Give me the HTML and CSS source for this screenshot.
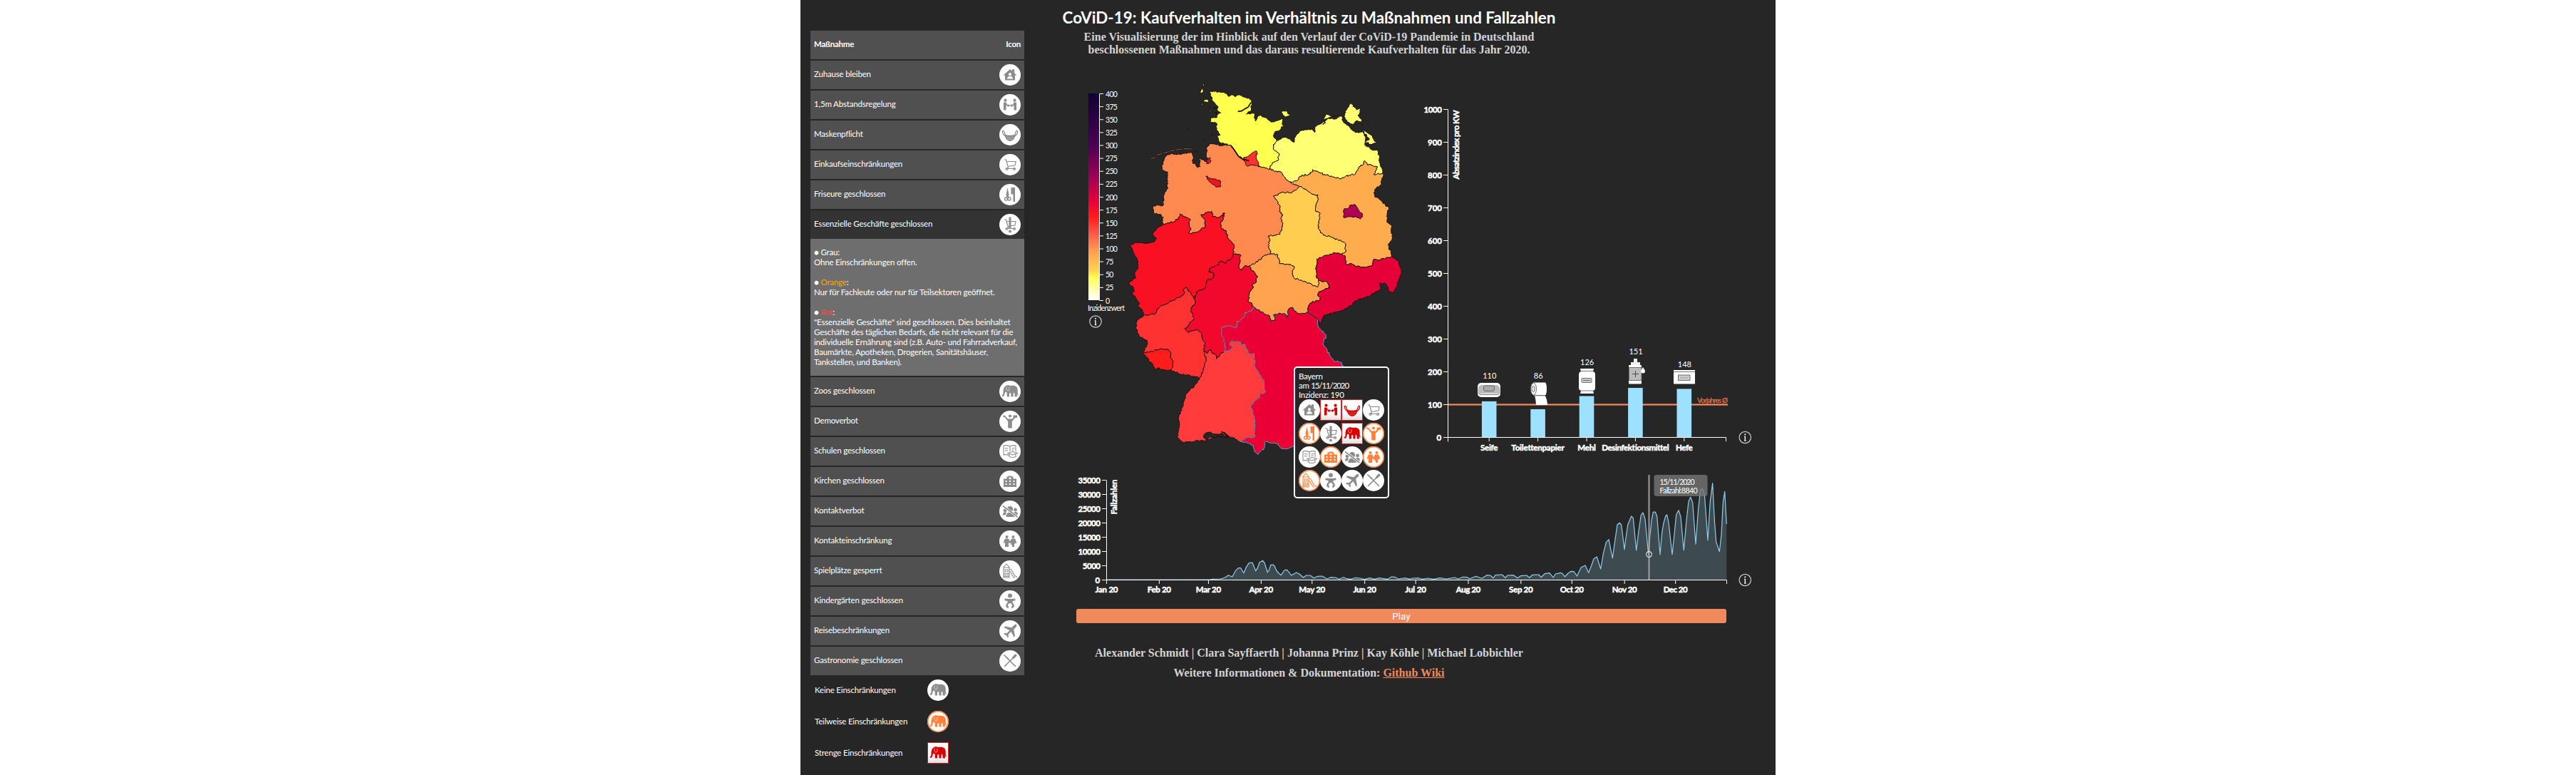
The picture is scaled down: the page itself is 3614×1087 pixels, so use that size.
FILE: index.html
```html
<!DOCTYPE html>
<html lang="de">
<head>
<meta charset="utf-8">
<title>CoViD-19: Kaufverhalten im Verhältnis zu Maßnahmen und Fallzahlen</title>
<link rel="stylesheet" href="styles.css">
</head>
<body>
<svg class="sprite" aria-hidden="true">
  <symbol id="home" viewBox="0 0 30 30"><path fill="currentColor" d="M5.500 15.500 15 7l2.800 2.400V7.200h3.400v5.300l3.300 3H22V22.500H8v-7z"/><circle cx="15" cy="14.200" r="2" fill="#fff"/><path fill="#fff" d="M11 20.500c0-5 8-5 8 0z"/></symbol>
  <symbol id="distance" viewBox="0 0 30 30"><g fill="currentColor"><circle cx="8.500" cy="8.700" r="2.100"/><circle cx="21.500" cy="8.700" r="2.100"/><path d="M6 11.500h3.500l1.500 3-1.500 2v6H6zM24 11.500h-3.500l-1.500 3 1.500 2v6H24z"/><path d="m10 16 3-2.300v1.600h4v-1.600l3 2.300-3 2.300v-1.600h-4v1.600z"/></g></symbol>
  <symbol id="mask" viewBox="0 0 30 30"><path fill="currentColor" d="M7.500 14.500Q15 17 22.500 14.500C22 20 19.500 23.500 15 24 10.500 23.500 8 20 7.500 14.500z"/><path fill="none" stroke="currentColor" stroke-width="1.200" d="M8 17C4.500 14 3.500 10 5.200 9.400 7 9 7.200 13 8.200 15M22 17c3.500-3 4.500-7 2.800-7.600C23 9 22.800 13 21.800 15"/><path stroke="#fff" stroke-opacity=".5" stroke-width=".6" fill="none" d="M10 18.500q5 1 10 0M11 21q4 1 8 0"/></symbol>
  <symbol id="cart" viewBox="0 0 30 30"><g fill="none" stroke="currentColor" stroke-width="1.200"><path d="M7 8h2.500l3 11-2 1.500h11.500M10.500 10.500h12.500l-1 5.500-10 1.500"/><circle cx="10.500" cy="21" r="1.500"/><circle cx="21" cy="21" r="1.500"/></g></symbol>
  <symbol id="hair" viewBox="0 0 30 30"><path fill="currentColor" d="m11.500 5 2 10-1.500 3.500h-1.500L9.500 15zM16.500 5H22v20h-2.500V14.500h-3z"/><g fill="none" stroke="currentColor" stroke-width="1.300"><circle cx="9.500" cy="21" r="2"/><circle cx="14" cy="21" r="2"/><path d="M10.500 19.500 12 16l1.500 3.500"/></g></symbol>
  <symbol id="essential" viewBox="0 0 30 30"><g fill="none" stroke="currentColor" stroke-width="1.200"><path d="M7 8h2.500l3 11-2 1.500h11.500M10.500 10.500h12.500l-1 5.500-10 1.500"/><circle cx="10.500" cy="21" r="1.500"/><circle cx="21" cy="21" r="1.500"/></g><path fill="currentColor" d="M13.500 4.500h3v16h-3z"/><circle cx="15" cy="24.500" r="1.900" fill="currentColor"/></symbol>
  <symbol id="elephant" viewBox="0 0 30 30"><path fill="currentColor" d="M10 6.700c2.500-1 4 .3 6 .2 3-.4 6.500-.4 8.500 2.100 1.500 2.300 1.300 5 1.200 8l1.200 3.500-1 .3-1-2.800v4.500h-3.200L21.500 18l-1.700-1.500-.3 6h-3l-.3-5.300h-2l-.3 5.300h-3L10.500 16.500 8.500 15.500C7.500 17 7.500 19.500 6.500 21.200 5.300 22.700 3.500 22 3.700 19.700l1.100.1c1-1.500.5-4.500.8-6.500C6 10 7.500 7.500 10 6.700z"/><path d="M10.500 8.500c-1.500 3 0 6.500 2.600 5.500 1-1.500 1.200-3 .6-5" fill="none" stroke="#fff" stroke-width=".6"/></symbol>
  <symbol id="demo" viewBox="0 0 30 30"><g fill="currentColor"><circle cx="15" cy="7.500" r="2.100"/><path d="M9.300 8.500 12 11.500h6l2.800-2.500 1.300 1.500L17.800 15v9.500h-5.600V15L7.800 9.500zM19.500 6.500h5.500v3.500h-5.500zM5 6.500l4 1v2l-4-1z"/></g></symbol>
  <symbol id="school" viewBox="0 0 30 30"><path fill="none" stroke="currentColor" stroke-width="1.100" d="M23 15V7q-4-1-8 1-4-2-9-1v13q4-1 8 1M15 8v7M8 10.500l4.500.5M8 13.500l4 .5M17.500 11l4-.5M17.500 13.500l3-.5M12 17.500l6.500-2 7 2-7 2.500zM14 18.500v4q4.500 2 9 0v-4"/></symbol>
  <symbol id="church" viewBox="0 0 30 30"><path fill="currentColor" d="M6 11.500h4.500v-3h2V7.500h5v1h2v3H24V23H6z"/><path fill="#fff" d="M14.400 9h1.200v1.200h1.200v1.200h-1.200v1.200h-1.200v-1.200h-1.200v-1.200h1.200zM8.500 14h2v2h-2zm5.500 0h2v2h-2zm5.500 0h2v2h-2zm-11 4h2v2h-2zm5.500 0h2v2h-2zm5.500 0h2v2h-2z"/></symbol>
  <symbol id="crowd" viewBox="0 0 30 30"><g fill="currentColor"><circle cx="15" cy="12" r="4"/><circle cx="8" cy="14" r="2.400"/><circle cx="22.500" cy="13" r="2.400"/><path d="M9.500 23q0-6.500 5.500-6.500t6.500 6.500zM5 20.500q0-4.200 3-4.200 1.800 0 2 1L8.500 20.500zM26 20q0-4-3.500-4-2 0-2.300 1l2 3z"/></g><path stroke="#fff" stroke-width="3.400" d="M5 7.500 25.500 23"/><path stroke="currentColor" stroke-width="1.600" d="M5 7.500 25.500 23"/></symbol>
  <symbol id="pair" viewBox="0 0 30 30"><g fill="currentColor"><circle cx="10.500" cy="9" r="2"/><circle cx="19.500" cy="9" r="2"/><path d="M8 11.500h5l2 4 2-4h5l2.500 6-1.500.6-1-1.600.7 2h-1.700V23h-3v-3h-2l.8-3-1.800 1.500L13 16.500V23H8v-6.500L6.500 18 5.700 17z"/></g></symbol>
  <symbol id="slide" viewBox="0 0 30 30"><path fill="none" stroke="currentColor" stroke-width="1.100" d="M6 24V9.500L10 5l4 4.500V24zM6 10h8M8 13h4v3H8zM6 18.500h8M6 20.500h8M6 22.500h8M14 12c5-1 4 9 11 11.500M14 15c3 0 3 8 8 9.500"/></symbol>
  <symbol id="baby" viewBox="0 0 30 30"><g fill="currentColor"><circle cx="15" cy="7.500" r="3"/><path d="m8 11.500 4.500.5h5l4.500-.5.800 2.500-4.300 1.200v3h-7v-3L7.200 14z"/></g><path d="M12.800 18c-3 2-3.300 4.500 0 6M17.200 18c3 2 3.300 4.500 0 6" stroke="currentColor" stroke-width="2.600" fill="none"/></symbol>
  <symbol id="plane" viewBox="0 0 30 30"><path fill="currentColor" d="M24 6c1 1 0 3-1.300 4.300l-2.500 2.500L22 22l-1.500 1.500-4-7.500-4 4 .5 3L11.500 24.500 10 21 6 19.500 7 18l3.500.3 4-4L6.500 10 8 8.500l9.300 1.700L20 7.500C21.300 6.200 23 5 24 6z"/></symbol>
  <symbol id="food" viewBox="0 0 30 30"><path stroke="currentColor" stroke-width="1.600" fill="none" d="M6.500 6.500 23 23M7 23 20 10"/><path fill="currentColor" d="m18 10 4-4.500L24.500 6 24 8.500 19.500 12.500zM6 6l7.500 5.500-1.500 1.500z"/></symbol>
  <symbol id="info" viewBox="0 0 20 20"><circle cx="10" cy="10" r="8.200" fill="none" stroke="#ccc" stroke-width="1.200"/><path d="M10 8.500v6M8.800 8.800H10M8.800 14.500h2.500" stroke="#eee" stroke-width="1.500"/><circle cx="10" cy="5.800" r="1.100" fill="#eee"/></symbol>
</svg>

<div class="page">
  <aside class="sidebar">
    <ul class="measures">
      <li class="row head"><span>Maßnahme</span><span>Icon</span></li>
      <li class="row"><span>Zuhause bleiben</span><svg class="icon"><use href="#home"/></svg></li>
      <li class="row"><span>1,5m Abstandsregelung</span><svg class="icon"><use href="#distance"/></svg></li>
      <li class="row"><span>Maskenpflicht</span><svg class="icon"><use href="#mask"/></svg></li>
      <li class="row"><span>Einkaufseinschränkungen</span><svg class="icon"><use href="#cart"/></svg></li>
      <li class="row"><span>Friseure geschlossen</span><svg class="icon"><use href="#hair"/></svg></li>
      <li class="open">
        <div class="row active"><span>Essenzielle Geschäfte geschlossen</span><svg class="icon"><use href="#essential"/></svg></div>
        <div class="detail">● Grau:<br>Ohne Einschränkungen offen.<br><br>● <span class="orange">Orange</span>:<br>Nur für Fachleute oder nur für Teilsektoren geöffnet.<br><br>● <span class="red">Rot</span>:<br>"Essenzielle Geschäfte" sind geschlossen. Dies beinhaltet<br>Geschäfte des täglichen Bedarfs, die nicht relevant für die<br>individuelle Ernährung sind (z.B. Auto- und Fahrradverkauf,<br>Baumärkte, Apotheken, Drogerien, Sanitätshäuser,<br>Tankstellen, und Banken).</div>
      </li>
      <li class="row"><span>Zoos geschlossen</span><svg class="icon"><use href="#elephant"/></svg></li>
      <li class="row"><span>Demoverbot</span><svg class="icon"><use href="#demo"/></svg></li>
      <li class="row"><span>Schulen geschlossen</span><svg class="icon"><use href="#school"/></svg></li>
      <li class="row"><span>Kirchen geschlossen</span><svg class="icon"><use href="#church"/></svg></li>
      <li class="row"><span>Kontaktverbot</span><svg class="icon"><use href="#crowd"/></svg></li>
      <li class="row"><span>Kontakteinschränkung</span><svg class="icon"><use href="#pair"/></svg></li>
      <li class="row"><span>Spielplätze gesperrt</span><svg class="icon"><use href="#slide"/></svg></li>
      <li class="row"><span>Kindergärten geschlossen</span><svg class="icon"><use href="#baby"/></svg></li>
      <li class="row"><span>Reisebeschränkungen</span><svg class="icon"><use href="#plane"/></svg></li>
      <li class="row"><span>Gastronomie geschlossen</span><svg class="icon"><use href="#food"/></svg></li>
    </ul>
    <ul class="legend">
      <li><span>Keine Einschränkungen</span><svg class="icon"><use href="#elephant"/></svg></li>
      <li><span>Teilweise Einschränkungen</span><svg class="icon partial"><use href="#elephant"/></svg></li>
      <li><span>Strenge Einschränkungen</span><svg class="icon strict"><use href="#elephant"/></svg></li>
    </ul>
  </aside>

  <main class="main">
    <header class="header">
      <h1>CoViD-19: Kaufverhalten im Verhältnis zu Maßnahmen und Fallzahlen</h1>
      <p>Eine Visualisierung der im Hinblick auf den Verlauf der CoViD-19 Pandemie in Deutschland<br>beschlossenen Maßnahmen und das daraus resultierende Kaufverhalten für das Jahr 2020.</p>
    </header>

    <div class="charts">
      <div class="map">
        <svg width="480" height="540" viewBox="1510 110 480 540">
          <defs>
            <linearGradient id="scale" x1="0" y1="0" x2="0" y2="1">
              <stop offset="0" stop-color="#0e0033"/><stop offset=".25" stop-color="#4a0055"/><stop offset=".4" stop-color="#9c0057"/><stop offset=".52" stop-color="#e60037"/><stop offset=".6" stop-color="#ff1c1c"/><stop offset=".68" stop-color="#ff5a48"/><stop offset=".76" stop-color="#ff9c50"/><stop offset=".86" stop-color="#ffd64f"/><stop offset=".89" stop-color="#ffff50"/><stop offset="1" stop-color="#fff"/>
            </linearGradient>
          </defs>
          <rect x="1527" y="131" width="15" height="290" fill="url(#scale)"/>
          <g id="scale-axis"></g>
          <text class="label" x="1526" y="436" textLength="52">Inzidenzwert</text>
          <use href="#info" x="1527" y="441" width="20" height="20"/>
          <g id="states" transform="translate(1510 110) scale(.33333)"></g>
        </svg>
        <div class="map-tip">
          Bayern<br>am <span class="date">15/11/2020</span><br>Inzidenz: 190
          <div class="tip-icons">
            <svg class="icon"><use href="#home"/></svg><svg class="icon strict"><use href="#distance"/></svg><svg class="icon strict"><use href="#mask"/></svg><svg class="icon"><use href="#cart"/></svg>
            <svg class="icon partial"><use href="#hair"/></svg><svg class="icon"><use href="#essential"/></svg><svg class="icon strict"><use href="#elephant"/></svg><svg class="icon partial"><use href="#demo"/></svg>
            <svg class="icon"><use href="#school"/></svg><svg class="icon partial"><use href="#church"/></svg><svg class="icon"><use href="#crowd"/></svg><svg class="icon partial"><use href="#pair"/></svg>
            <svg class="icon partial"><use href="#slide"/></svg><svg class="icon"><use href="#baby"/></svg><svg class="icon"><use href="#plane"/></svg><svg class="icon"><use href="#food"/></svg>
          </div>
        </div>
      </div>

      <svg class="bars" width="490" height="540" viewBox="1990 110 490 540">
        <path stroke="#d96f49" stroke-width="2.600" d="M2031 567.500h393"/><path stroke="#f29066" stroke-width="1" d="M2031 567.500h393"/>
        <text x="2381" y="565" class="average" textLength="43">Vorjahres Ø</text>
        <g id="bar-data"></g>
        <g id="bar-axis"></g>
        <text class="tick" transform="translate(2047 251.500) rotate(-90)" textLength="97">Absatzindex pro KW</text>
        <g stroke="#555" stroke-width=".8">
          <g><rect x="2073" y="537" width="32" height="20" rx="5" fill="#fff" stroke="none"/><path d="M2073.500 545q1-5 6-5h19q5 0 6 5v7h-31z" fill="#bbb" stroke="none"/><path d="M2074 551.500q1 2 4 2h22q3 0 4-2" fill="none"/><rect x="2081.500" y="541" width="15" height="7.500" rx="2" fill="#aaa"/></g>
          <g><path d="M2151 536.500h17q2 2 2 9t-2 9h-17z" fill="#fff" stroke="none"/><ellipse cx="2151.500" cy="545.500" rx="4" ry="8.500" fill="#eee"/><ellipse cx="2151" cy="545.500" rx="2" ry="4" fill="none"/><path d="M2153.500 555h14q3 4 3.500 13h-16q-.5-9-2-13z" fill="#fff" stroke="none"/><path d="M2153 554.800h15"/></g>
          <g><path d="M2217 517h19l-1 4q3 1 3 4v19q0 3-3 4l1 4h-19l1-4q-3-1-3-4v-19q0-3 3-4z" fill="#fff" stroke="none"/><path d="M2217 520.500h18M2217 548h18"/><rect x="2219" y="530.500" width="14" height="6" rx="1" fill="#ccc"/><path d="M2221 533.500h10"/></g>
          <g><path d="M2292 503h5v5h4v5h-13v-5h4z" fill="#eee" stroke="none"/><rect x="2285" y="512" width="18" height="26.500" rx="1" fill="#fff" stroke="none"/><rect x="2285.500" y="515.500" width="17.500" height="18" fill="#bbb"/><path d="M2290 524.500h9M2294.500 520v9" stroke="#333"/><path d="M2305 515q6 8 0 8.500-6-.5 0-8.500z" fill="#fff" stroke="none"/></g>
          <g><rect x="2348" y="519" width="30" height="19.500" fill="#fff" stroke="none"/><path d="M2348 521.500h30"/><rect x="2354.500" y="526" width="16.500" height="7.500" fill="#ccc"/><path d="M2357 529.800h11.500" stroke="#999"/></g>
        </g>
        <use href="#info" x="2438.300" y="603.500" width="20" height="20"/>
      </svg>
    </div>

    <svg class="timeline" width="970" height="190" viewBox="1510 650 970 190">
      <path id="cases" class="cases"/>
      <g id="time-axis"></g>
      <text class="tick" transform="translate(1567 721.500) rotate(-90)" textLength="49">Fallzahlen</text>
      <path d="M2313.500 666v147" stroke="#aaa" stroke-opacity=".75" stroke-width="2.500"/>
      <circle cx="2313.500" cy="777.500" r="4" fill="none" stroke="#fff"/>
      <rect x="2320.500" y="666" width="75" height="30" rx="3.500" fill="#777" fill-opacity=".78"/>
      <text class="label" x="2328.500" y="679.500" textLength="49">15/11/2020</text>
      <text class="label" x="2328.500" y="691.500" textLength="53">Fallzahl:8840</text>
      <use href="#info" x="2438.300" y="803.500" width="20" height="20"/>
    </svg>

    <button class="play" type="button">Play</button>
    <footer class="footer">
      <p>Alexander Schmidt | Clara Sayffaerth | Johanna Prinz | Kay Köhle | Michael Lobbichler</p>
      <p>Weitere Informationen &amp; Dokumentation: <a href="#">Github Wiki</a></p>
    </footer>
  </main>
</div>
<script src="charts.js"></script>
</body>
</html>
```
FILE: styles.css
```css
body { margin: 0; background: #fff; color: #fff; font: 11px/14px Lato, sans-serif; }
ul { list-style: none; margin: 0; padding: 0; }
.sprite { position: absolute; width: 0; height: 0; }

.page { display: flex; width: 1368px; height: 1087px; margin: 0 auto; background: #262626; overflow: hidden; }

.sidebar { width: 300px; padding: 43px 0 0 14px; flex: none; font-size: 11.5px; letter-spacing: -.18px; }
.measures { display: flex; flex-direction: column; gap: 2px; }
.row { display: flex; align-items: center; justify-content: space-between; height: 40px; padding: 0 5px; background: #505050; box-sizing: border-box; }
.row span { position: relative; top: -1px; }
.head { font-weight: bold; letter-spacing: -.25px; }
.active { background: #333; }
.detail { padding: 12px 5px; background: #6e6e6e; white-space: nowrap; }
.orange { color: #ffa500; }
.red { color: #ff4545; }

.icon { display: block; flex: none; width: 30px; height: 30px; border-radius: 50%; background: #fff; color: #8c8c8c; }
.icon.partial { color: #ff8038; box-shadow: inset 0 0 0 1.5px #ff8038; }
.icon.strict { color: #da0000; border-radius: 0; background: linear-gradient(#fff 60%, #ddd); box-shadow: inset 0 0 0 1px #dc2020; }

.legend { margin-top: -1px; }
.legend li { display: grid; grid-template-columns: 158px 30px; align-items: center; height: 44px; padding-left: 6px; }

.main { flex: none; width: 970px; margin-left: 73px; }
.header, .footer { width: 653px; text-align: center; font: bold 16px/18px "Liberation Serif", serif; color: #d3d3d3; white-space: nowrap; }
.header { padding-top: 11px; height: 99px; box-sizing: border-box; margin-bottom: 11px; }
.header h1 { margin: 0 -30px 4px; font: bold 22.400px/28px Lato, sans-serif; color: #fff; }
.header p { margin: 0; }

.charts { display: flex; height: 540px; }
.charts svg, .timeline { display: block; }
.map { position: relative; width: 480px; }
.map-tip { position: absolute; left: 305px; top: 404px; width: 134px; height: 185px; box-sizing: border-box; padding: 5px 5px 0; border: 2px solid #fff; border-radius: 5px; background: #262626; font-size: 11.500px; line-height: 13px; letter-spacing: -.3px; }
.date { letter-spacing: -1.1px; }
.tip-icons { display: grid; grid-template-columns: repeat(4, 30px); row-gap: 3px; }

.label, .value { font: 11px Lato, sans-serif; fill: #fff; }
.label { font-size: 10.500px; }
.value { text-anchor: middle; }
.tick { font: bold 11.500px Lato, sans-serif; fill: #fff; stroke: #fff; stroke-width: .5px; }
.average { font: 10px Lato, sans-serif; fill: #e07048; stroke: #e07048; stroke-width: .3px; }
.axis { fill: none; stroke: #fff; stroke-width: 1; }
.state { stroke: #1a1010; stroke-width: 3; stroke-linejoin: round; }
.hovered { stroke: #5f9fc8; }
.cases { fill: none; stroke: #8fcdec; stroke-width: 1.200; stroke-linejoin: round; }
.cases-area { fill: #9de0ff; fill-opacity: .2; }

.play { display: block; width: 912px; height: 20px; margin: 14px 0 28px; padding: 0; border: 0; border-radius: 3px; background: #f0895c; color: #fff; font: 13.500px/18px Roboto, sans-serif; }
.footer p { margin: 0; line-height: 28px; }
.footer a { color: #f0895c; }
```
FILE: charts.js
```js
const NS = "http://www.w3.org/2000/svg";
function add(parent, tag, attrs, text) {
  const el = document.createElementNS(NS, tag);
  for (const k in attrs) el.setAttribute(k, attrs[k]);
  if (text !== undefined) el.textContent = text;
  parent.appendChild(el);
  return el;
}
const $ = id => document.getElementById(id);

/* Borders shared by two states, each listed once. */
const B = {
  shMv: "848,260 830,278 832,300 853,315 850,345 832,352 816,368 812,382",
  shNi: "812,382 775,372 740,350 705,345 680,325 655,290 645,280",
  niMv: "812,382 840,390 858,392 870,408 885,425 900,436",
  mvBb: "900,436 930,430 940,412 985,402 995,384 1030,398 1045,405 1085,415 1110,423 1130,415 1150,407 1175,402 1190,372 1205,365 1213,346 1225,364 1250,368 1268,372 1252,405 1265,403 1289,400",
  niBb: "900,436 918,448 938,454",
  stBb: "938,454 970,470 990,486 1017,490 1014,520 1008,535 1008,560 1026,567 1020,605 1018,632 1040,660 1075,668 1115,685 1133,695 1133,730 1115,740",
  niSt: "938,454 925,470 905,482 868,478 830,495 845,515 858,540 855,560 867,570 860,590 869,612 865,640 858,655 808,663 816,680 808,700 820,738",
  bbSn: "1115,740 1130,745 1138,785 1160,780 1175,790 1210,795 1240,790 1252,762 1275,765 1310,754 1331,753",
  stSn: "1115,740 1090,735 1050,745 1012,760 1007,800 1010,830 1020,850",
  stTh: "820,738 848,742 858,780 905,785 918,797 910,818 918,840 940,850 970,858 1000,872 1018,875 1020,850",
  snTh: "1020,850 1055,855 1068,882 1040,890 1018,905 1025,932 985,945 975,965 977,985",
  niTh: "820,738 785,750 780,760 727,790",
  niHe: "727,790 712,788 697,806 683,795 690,770 690,742 672,738 658,742",
  niNw: "658,742 665,705 655,690 640,675 630,640 612,632 608,610 615,600 625,567 605,583 575,583 570,560 550,565 525,573 543,600 543,625 520,640 480,655 472,650 483,632 475,620 478,592 455,582 437,570 430,590 405,605 368,613",
  nwHe: "658,742 658,752 625,778 610,767 598,775 600,785 570,795 557,812 578,820 575,840 550,850 545,880 510,897 500,915",
  nwRp: "500,915 497,930 475,895 460,880 450,890 455,905 437,920 400,937 365,955 340,970 330,993 310,993 285,997",
  heRp: "500,915 500,950 483,965 485,985 497,1010 470,1040 457,1052 470,1068 510,1058 525,1070 530,1090 542,1115 538,1145",
  heTh: "727,790 735,805 762,832 755,860 738,870 745,880 728,905 723,938 738,945 745,960",
  heBy: "745,960 738,978 710,985 705,1005 690,1018 675,1022 675,1047 640,1040 612,1045 612,1080 627,1115 622,1150",
  heBw: "538,1145 550,1158 565,1142 570,1155 585,1160 590,1180 605,1162 622,1150",
  thBy: "745,960 790,990 815,1002 818,1022 838,1018 830,995 850,990 880,993 888,1010 893,972 910,963 930,988 977,985",
  snBy: "977,985 1000,1002 1012,1012",
  rpSl: "280,1155 320,1150 355,1137 380,1140 395,1150 395,1175 409,1192 400,1228",
  rpBw: "538,1145 546,1180 540,1210 520,1262",
  bwBy: "622,1150 645,1145 660,1128 645,1120 650,1108 690,1108 690,1120 712,1122 715,1140 730,1160 748,1158 752,1215 768,1240 790,1270 795,1320 772,1325 770,1345 745,1362 733,1380 745,1415 752,1440 750,1510 715,1512 688,1528"
};
const pts = s => s.trim().split(/\s+/).map(p => p.split(",").map(Number));

/* Roughens a segment the same way from either end, so neighbours stay aligned. */
function rough(a, b) {
  const flip = a[0] > b[0] || (a[0] === b[0] && a[1] > b[1]);
  const [p, q] = flip ? [b, a] : [a, b];
  const len = Math.hypot(q[0] - p[0], q[1] - p[1]);
  const n = Math.max(1, Math.round(len / 6));
  const out = [];
  for (let i = 0; i < n; i++) {
    const t = i / n;
    let dx = 0, dy = 0;
    if (i) {
      const h = Math.sin(p[0] * 12.9 + p[1] * 78.2 + i * 37.7) * 43758.5;
      const r = h - Math.floor(h);
      const g = r * 57.3 - Math.floor(r * 57.3);
      dx = (r - .5) * 7; dy = (g - .5) * 7;
    }
    out.push([p[0] + (q[0] - p[0]) * t + dx, p[1] + (q[1] - p[1]) * t + dy]);
  }
  out.push(q);
  return flip ? out.reverse() : out;
}
function state(fill, parts, cls) {
  let ring = [];
  for (const part of parts) {
    if (part[0] === "-") ring = ring.concat(pts(B[part.slice(1)]).reverse());
    else if (B[part]) ring = ring.concat(pts(B[part]));
    else ring = ring.concat(pts(part));
  }
  let d = "";
  ring.forEach((p, i) => {
    const q = ring[(i + 1) % ring.length];
    rough(p, q).slice(0, -1).forEach(v => { d += (d ? "L" : "M") + v[0].toFixed(1) + " " + v[1].toFixed(1); });
  });
  add($("states"), "path", { d: d + "Z", fill, class: "state " + (cls || "") });
}

state("#ffff50", ["shMv", "shNi", "605,270 593,245 606,238 590,215 590,188 562,186 565,168 585,165 608,145 595,138 597,120 575,95 561,54 600,56 630,63 643,76 655,68 668,77 686,66 712,80 727,82 738,100 736,135 716,150 750,147 755,180 762,160 778,155 796,165 815,180 835,182 868,168 870,203 845,222 832,232 833,250"]);
state("#ffff73", ["mvBb", "1285,375 1275,340 1270,305 1245,300 1215,280 1218,250 1205,222 1175,228 1150,205 1125,185 1115,158 1095,170 1060,168 1038,195 1045,180 1035,188 1003,205 1003,228 995,212 945,220 922,246 918,268 900,256 880,248", "shMv", "niMv"]);
state("#ff8a4f", ["-shNi", "niMv", "niBb", "niSt", "niTh", "niHe", "niNw", "360,600 367,585 357,573 325,565 325,535 365,535 370,490 383,465 385,395 360,387 365,350 380,325 400,316 430,318 487,310 492,330 490,350 510,375 522,372 517,335 530,342 550,352 547,320 550,290 561,275 575,275 605,283"]);
state("#ffac4f", ["mvBb", "1292,402 1285,425 1282,448 1255,468 1255,495 1280,510 1315,545 1308,570 1308,605 1325,615 1325,645 1332,655 1328,680 1312,700", "1331,753", "-bbSn", "-stBb", "-niBb"]);
state("#ffcd4f", ["stBb", "stSn", "-stTh", "-niSt"]);
state("#f91023", ["nwHe", "nwRp", "275,970 258,960 265,945 240,915 233,905 245,893 240,880 218,862 250,835 243,820 260,800 260,770 245,740 235,720 228,703 250,690 285,695 330,685 337,672 320,655 345,625", "-niNw"]);
state("#ff3232", ["nwRp", "255,1020 250,1050 265,1085 298,1102 298,1120", "rpSl", "440,1245 475,1248", "-rpBw", "-heRp"]);
state("#ff1c1c", ["rpSl", "360,1225 345,1218 330,1225 320,1200 305,1185"]);
state("#ffa34f", ["stTh", "snTh", "-thBy", "-heTh", "-niTh"]);
state("#e50037", ["stSn", "snTh", "snBy", "1025,1030 1045,995 1080,987 1110,980 1140,965 1180,935 1235,915 1285,885 1275,862 1300,862 1310,875 1315,895 1338,903 1355,855 1367,810 1358,775", "-bbSn"]);
state("#f2082c", ["nwHe", "heRp", "heBw", "-heBy", "-heTh", "niHe"]);
state("#ff3b3b", ["heBw", "bwBy", "660,1512 640,1505 615,1512 590,1502 560,1520 510,1525 480,1528 445,1532 425,1512 433,1460 430,1425 450,1370 465,1325 500,1290", "-rpBw"]);
state("#ea0035", ["-heBy", "thBy", "snBy", "1015,1035 1052,1080 1038,1115 1065,1160 1085,1190 1115,1195 1122,1215 1200,1400 1100,1520 915,1545 885,1558 860,1555 850,1538 795,1528 790,1555 765,1583 750,1570 745,1545 715,1530", "-bwBy"], "hovered");
/* Redraw the outlines that the highlighted state must not cover. */
for (const k of ["thBy", "snBy"]) {
  const l = pts(B[k]); let d = "";
  l.slice(0, -1).forEach((p, i) => rough(p, l[i + 1]).forEach(v => d += (d ? "L" : "M") + v.join(" ")));
  add($("states"), "path", { d, fill: "none", class: "state" });
}
/* City states, islands and Lake Constance. */
state("#ff3030", ["705,332 720,330 745,310 760,307 757,335 772,372 745,365 722,370 708,350"]);
state("#ff1020", ["553,335 565,333 563,355 547,357"]);
state("#f91023", ["545,412 575,422 605,430 607,455 590,457 572,445"]);
state("#b00055", ["1125,585 1128,548 1145,545 1150,535 1175,532 1185,550 1205,575 1195,592 1180,585 1150,582"]);
state("#ffff50", ["865,140 885,137 898,158 880,162 870,155"]);
state("#ffff50", ["540,22 530,38 534,58 522,62 527,40"]);
state("#ffff50", ["536,90 553,87 556,97 541,101"]);
state("#ffff50", ["522,98 530,105 531,116"]);
state("#ffff50", ["560,134 572,132 568,141"]);
state("#ffff73", ["1127,160 1140,122 1160,103 1165,118 1180,132 1195,125 1195,140 1185,155 1205,182 1180,178 1165,193 1140,183"]);
state("#ffff73", ["1207,214 1225,228 1245,240 1263,270 1238,277 1215,268 1234,255 1215,235"]);
state("#ffff73", ["1040,180 1050,150 1075,158 1115,156 1080,162 1052,168"]);
for (const s of ["315,338 330,333", "340,322 360,317", "368,314 390,308", "396,306 414,302", "420,301 445,297", "452,296 485,297"]) {
  const [a, b] = pts(s);
  add($("states"), "path", { d: `M${a}L${b}`, stroke: "#1a1010", "stroke-width": 7 });
  add($("states"), "path", { d: `M${a}L${b}`, stroke: "#a8603c", "stroke-width": 3 });
}
add($("states"), "path", { d: "M680 139l16-2 12-8 15-8 12-20M705 340l22 7M650 281l14 18 20 30 22 15", fill: "none", stroke: "#16110f", "stroke-width": 5 });
add($("states"), "path", { d: "M535 1510q0-15 15-20l15-2 10 8 28 2 8-6 14 12 16 8-22-2-20-6-18 8-18-4-14 14z M610 1486l14 4 16 14-4 2z", fill: "#262626", stroke: "#151010", "stroke-width": 3 });
add($("states"), "path", { d: "M470 209h4M570 236h4M537 258h4M500 306h6M578 125h8M560 120h5M585 145h6M1205 195h4M1227 195h3", stroke: "#150b0b", "stroke-width": 5 });

/* Axes */
const sx = $("scale-axis");
let d = "M1547.500 131.500H1542.500V421.500H1547.500";
for (let i = 0; i <= 16; i++) {
  const y = 131.5 + i * 18.125;
  d += `M1543 ${y}h5`;
  const t = String(400 - i * 25);
  add(sx, "text", { class: "label", x: 1551, y: y + 4, textLength: t.length * 5.65 }, t);
}
add(sx, "path", { class: "axis", d });

function label(g, text, x, y, w, anchor) {
  add(g, "text", { class: "tick", x: anchor === "end" ? x - w : x - w / 2, y, textLength: w }, text);
}
const bx = $("bar-axis");
d = "M2025 153.500H2031.500V613.500M2031.500 619.500V613.500H2421.500V619";
for (let i = 0; i <= 10; i++) {
  const y = 613.5 - i * 46;
  d += `M2025 ${y}h6`;
  label(bx, String(i * 100), 2023, y + 4, i === 0 ? 7.5 : i === 10 ? 25.5 : 20, "end");
}
[["Seife", 110, 2089.2, 24.5, 530.5], ["Toilettenpapier", 86, 2157.6, 74.5, 530.5], ["Mehl", 126, 2226, 25.5, 511.5], ["Desinfektionsmittel", 151, 2294.4, 94.5, 496.5], ["Hefe", 148, 2362.8, 23.5, 514.5]].forEach(([n, v, x, w, y]) => {
  add($("bar-data"), "rect", { x: x - 10.3, y: 613.5 - v * .46, width: 20.6, height: v * .46, fill: "#9de0ff" });
  add($("bar-data"), "text", { class: "value", x: x + .6, y }, v);
  d += `M${x} 613.500v5.500`;
  label(bx, n, x, 631.5, w);
});
add(bx, "path", { class: "axis", d });

const tx = $("time-axis");
d = "M1552.500 673.500V819M1552 813.500H2422.500V819";
for (let i = 0; i <= 7; i++) {
  const y = 813.5 - i * 20;
  d += `M1546 ${y}h6`;
  const t = String(i * 5000);
  label(tx, t, 1544, y + 4, i === 0 ? 7.5 : t.length * 6.3, "end");
}
[["Jan", 0, 32], ["Feb", 31, 33], ["Mar", 60, 35.5], ["Apr", 91, 33.5], ["May", 121, 37], ["Jun", 152, 32.5], ["Jul", 182, 29.5], ["Aug", 213, 34.5], ["Sep", 244, 33.5], ["Oct", 274, 33], ["Nov", 305, 35], ["Dec", 335, 34]].forEach(([m, day, w]) => {
  const x = 1552.5 + day * 2.3825;
  d += `M${x} 814v5`;
  label(tx, m + " 20", x, 831, w);
});
add(tx, "path", { class: "axis", d });

/* Daily case curve: first and second half of the year. */
const first = "157,489 590,489 605,487 635,486 645,484 660,478 670,470 686,477 700,452 712,440 722,440 735,461 745,437 757,419 771,417 785,452 793,440 801,416 815,409 822,418 835,458 842,447 848,427 858,426 864,431 872,450 882,462 892,470 905,450 915,447 925,457 935,471 956,459 970,466 985,480 998,471 1015,471 1030,482 1045,475 1065,474 1085,486 1100,479 1120,480 1136,487 1155,479 1165,484 1186,487 1205,481 1225,483 1243,488 1265,482 1285,487 1305,482 1340,487 1357,477 1370,478 1385,486 1415,482 1435,487";
const second = "5,483 30,482 45,487 70,483 95,487 120,482 148,486 182,480 197,486 218,478 235,479 245,485 272,475 297,484 318,470 332,471 346,482 353,470 382,468 396,481 405,471 430,470 447,482 460,473 485,471 497,481 510,469 537,468 546,479 562,464 582,461 597,480 607,465 628,460 637,464 646,477 660,462 672,454 685,455 697,474 715,437 732,429 746,460 758,430 768,401 781,393 797,444 808,380 820,332 831,320 847,399 855,340 867,258 877,250 884,258 897,362 902,320 911,258 926,222 934,230 947,366 955,300 967,218 975,207 984,235 998,383 1003,320 1012,235 1018,205 1027,204 1034,222 1047,383 1055,290 1062,250 1070,222 1076,216 1083,250 1098,383 1108,290 1115,215 1125,197 1134,225 1147,365 1158,240 1167,160 1175,142 1184,165 1197,340 1208,190 1217,112 1225,106 1234,130 1248,323 1258,160 1268,83 1276,240 1283,330 1297,371 1305,300 1312,165 1319,118 1327,255";
const curve = pts(first).map(p => [1500 + p[0] / 3, 650 + p[1] / 3])
  .concat(pts(second).map(p => [1980 + p[0] / 3, 650 + p[1] / 3]));
const line = "M" + curve.map(p => p.map(v => v.toFixed(1)).join(" ")).join("L");
$("cases").setAttribute("d", line);
const area = add($("cases").parentNode, "path", { class: "cases-area", d: line + "V813.500H1552.500Z" });
$("cases").before(area);
```
